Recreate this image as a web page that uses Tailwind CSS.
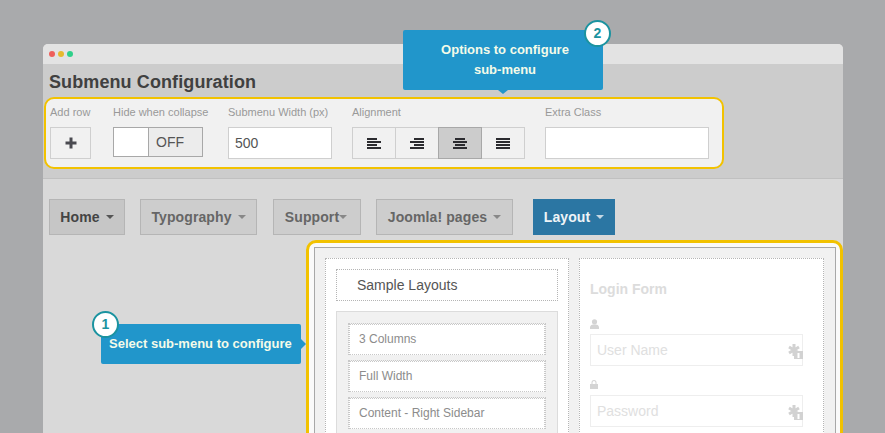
<!DOCTYPE html>
<html lang="en">
<head>
    <meta charset="UTF-8">
    <title>Submenu Configuration</title>
    <script src="https://cdn.jsdelivr.net/npm/@tailwindcss/browser@4"></script>
</head>
<body class="bg-[#a9aaac] h-[433px] overflow-hidden font-['Liberation_Sans',Arial,sans-serif] antialiased">
<div class="relative h-[433px] overflow-hidden pt-[44px] pl-[43px]">
    <div class="w-[800px] h-[389px] rounded-t-[5px] overflow-hidden bg-[#d9d9d9]">
        <!-- window bar -->
        <div class="h-[20px] bg-[#e3e3e3] flex items-center gap-[3px] pl-[6px]">
            <span class="w-[6px] h-[6px] rounded-full bg-[#ee5f5b]"></span>
            <span class="w-[6px] h-[6px] rounded-full bg-[#e6b92e]"></span>
            <span class="w-[6px] h-[6px] rounded-full bg-[#2fd08a]"></span>
        </div>

        <!-- config toolbar -->
        <div class="h-[115px] bg-[#cccccc] border-b border-[#c0c0c0]">
            <h1 class="pl-[6px] pt-[8px] h-[33px] text-[18px] leading-[21px] tracking-[0.1px] font-bold text-[#404040]">Submenu Configuration</h1>
            <div class="w-[680px] h-[72px] ml-[1px] border-[2px] border-[#f2c200] rounded-[10px] bg-[#f1f1f1] flex pl-[4px] pt-[6px] text-[11px] text-[#999999]">
                <div class="w-[63px]">
                    <div class="h-[22px] leading-[14px]">Add row</div>
                    <div class="w-[41px] h-[32px] border border-[#cfcfcf] flex items-center justify-center">
                        <svg width="12" height="12" viewBox="0 0 12 12"><path d="M4.5 0.5h3v4h4v3h-4v4h-3v-4h-4v-3h4z" fill="#4a4a50"/></svg>
                    </div>
                </div>
                <div class="w-[115px]">
                    <div class="h-[22px] leading-[14px]">Hide when collapse</div>
                    <div class="w-[90px] h-[30px] border border-[#a8a8a8] flex text-[14px] text-[#555555]">
                        <div class="w-[35px] bg-white border-r border-[#a8a8a8]"></div>
                        <div class="flex-1 bg-[#ececec] pl-[7px] leading-[28px]">OFF</div>
                    </div>
                </div>
                <div class="w-[124px]">
                    <div class="h-[22px] leading-[14px]">Submenu Width (px)</div>
                    <div class="w-[104px] h-[32px] border border-[#cfcfcf] bg-white pl-[6px] leading-[30px] text-[14px] text-[#555555]">500</div>
                </div>
                <div class="w-[193px]">
                    <div class="h-[22px] leading-[14px]">Alignment</div>
                    <div class="w-[173px] h-[32px] border border-[#cfcfcf] flex">
                        <div class="w-[43px] border-r border-[#cfcfcf] flex items-center justify-center">
                            <svg width="15" height="11" viewBox="0 0 15 11" fill="#2b2b2f"><rect y="0" width="10" height="2"/><rect y="3" width="14" height="2"/><rect y="6" width="10" height="2"/><rect y="9" width="14" height="2"/></svg>
                        </div>
                        <div class="w-[43px] flex items-center justify-center">
                            <svg width="15" height="11" viewBox="0 0 15 11" fill="#2b2b2f"><rect x="4" y="0" width="10" height="2"/><rect y="3" width="14" height="2"/><rect x="4" y="6" width="10" height="2"/><rect y="9" width="14" height="2"/></svg>
                        </div>
                        <div class="w-[44px] -ml-px -my-px h-[32px] bg-[#cccccc] border border-[#a8a8a8] flex items-center justify-center">
                            <svg width="15" height="11" viewBox="0 0 15 11" fill="#2b2b2f"><rect x="2" y="0" width="10" height="2"/><rect y="3" width="14" height="2"/><rect x="2" y="6" width="10" height="2"/><rect y="9" width="14" height="2"/></svg>
                        </div>
                        <div class="flex-1 flex items-center justify-center">
                            <svg width="15" height="11" viewBox="0 0 15 11" fill="#2b2b2f"><rect y="0" width="14" height="2"/><rect y="3" width="14" height="2"/><rect y="6" width="14" height="2"/><rect y="9" width="14" height="2"/></svg>
                        </div>
                    </div>
                </div>
                <div class="w-[164px]">
                    <div class="h-[22px] leading-[14px]">Extra Class</div>
                    <div class="w-[164px] h-[32px] border border-[#cfcfcf] bg-white"></div>
                </div>
            </div>
        </div>

        <!-- main menu -->
        <div class="flex pl-[6px] pt-[20px] text-[14px] leading-[34px] tracking-[0.1px] font-bold text-[#666666]">
            <div class="w-[76px] h-[36px] border border-[#b5b5b5] bg-[#c6c6c6] text-[#444444] flex justify-center items-center gap-[6px]">Home<span class="border-x-[4px] border-x-transparent border-t-[4px] border-t-[#555555]"></span></div>
            <div class="w-[117px] h-[36px] ml-[15px] border border-[#b5b5b5] bg-[#cdcdcd] flex justify-center items-center gap-[6px]">Typography<span class="border-x-[4px] border-x-transparent border-t-[4px] border-t-[#888888]"></span></div>
            <div class="w-[88px] h-[36px] ml-[16px] pr-[2px] border border-[#b5b5b5] bg-[#cdcdcd] flex justify-center items-center">Support<span class="border-x-[4px] border-x-transparent border-t-[4px] border-t-[#888888]"></span></div>
            <div class="w-[137px] h-[36px] ml-[15px] border border-[#b5b5b5] bg-[#cdcdcd] flex justify-center items-center gap-[6px]">Joomla! pages<span class="border-x-[4px] border-x-transparent border-t-[4px] border-t-[#888888]"></span></div>
            <div class="w-[82px] h-[36px] ml-[20px] bg-[#2b76a3] text-[#eef4f7] flex justify-center items-center gap-[6px]">Layout<span class="border-x-[4px] border-x-transparent border-t-[4px] border-t-[#c5d8e4]"></span></div>
        </div>

        <!-- dropdown -->
        <div class="w-[537px] h-[200px] ml-[263px] mt-[5px] border-[3px] border-[#f2c200] rounded-t-[10px] bg-[#fafafa] pl-[5px] pt-[4px]">
            <div class="w-[522px] h-[200px] border border-[#a8a8a8] bg-[#f1f1f1] flex gap-[10px] pl-[10px] pt-[10px]">
                <div class="w-[244px] h-[200px] border border-dotted border-[#b5b5b5] bg-white p-[10px]">
                    <div class="h-[32px] border border-dotted border-[#b5b5b5] pl-[20px] leading-[30px] text-[14px] text-[#555555]">Sample Layouts</div>
                    <div class="h-[140px] mt-[10px] border border-[#dcdcdc] bg-[#f1f1f1] px-[11px] pt-[11px] text-[12px] text-[#8c8c8c] flex flex-col gap-[5px]">
                        <div class="h-[32px] shrink-0 border-x border-t border-dotted border-[#c8c8c8]"><div class="h-[31px] border border-dotted border-[#c8c8c8] bg-white pl-[9px] leading-[29px]">3 Columns</div></div>
                        <div class="h-[32px] shrink-0 border-x border-t border-dotted border-[#c8c8c8]"><div class="h-[31px] border border-dotted border-[#c8c8c8] bg-white pl-[9px] leading-[29px]">Full Width</div></div>
                        <div class="h-[32px] shrink-0 border-x border-t border-dotted border-[#c8c8c8]"><div class="h-[31px] border border-dotted border-[#c8c8c8] bg-white pl-[9px] leading-[29px]">Content - Right Sidebar</div></div>
                    </div>
                </div>
                <div class="w-[245px] h-[200px] border border-dotted border-[#b5b5b5] bg-white pl-[10px] pt-[20px]">
                    <div class="text-[14px] leading-[20px] font-bold text-[#dcdcdc]">Login Form</div>
                    <svg class="block mt-[20px]" width="9" height="10" viewBox="0 0 9 10" fill="#d4d4d4"><circle cx="4.5" cy="2.800" r="2.600"/><path d="M0 10V7.500Q1 5.500 3 5.500H6Q8 5.500 9 7.500V10z"/></svg>
                    <div class="relative w-[213px] h-[32px] mt-[5px] border border-[#eeeeee] pl-[6px] leading-[30px] text-[14px] text-[#e0e0e0]">User Name
                        <svg class="absolute right-[-1px] top-[8px]" width="15" height="16" viewBox="0 0 15 16"><path d="M6 1v12M1 4l10 6M1 10l10-6" stroke="#d2d2d2" stroke-width="3" fill="none"/><rect x="6" y="8" width="9" height="8" fill="#d2d2d2"/><rect x="9.500" y="10" width="2" height="5" fill="#ffffff"/></svg>
                    </div>
                    <svg class="block mt-[14px]" width="8" height="9" viewBox="0 0 8 9" fill="#d4d4d4"><path d="M0 4h8v5H0zM1.500 4V2.500a2.500 2.500 0 0 1 5 0V4h-1V2.500a1.500 1.500 0 0 0-3 0V4z"/></svg>
                    <div class="relative w-[213px] h-[32px] mt-[6px] border border-[#eeeeee] pl-[6px] leading-[30px] text-[14px] text-[#e0e0e0]">Password
                        <svg class="absolute right-[-1px] top-[8px]" width="15" height="16" viewBox="0 0 15 16"><path d="M6 1v12M1 4l10 6M1 10l10-6" stroke="#d2d2d2" stroke-width="3" fill="none"/><rect x="6" y="8" width="9" height="8" fill="#d2d2d2"/><rect x="9.500" y="10" width="2" height="5" fill="#ffffff"/></svg>
                    </div>
                </div>
            </div>
        </div>
    </div>

    <!-- callout 2 -->
    <div class="absolute left-[403px] top-[30px] w-[200px] h-[60px] rounded-[2px] bg-[#2196cb] text-center text-[13px] leading-[20px] font-bold text-[#f4fbe9] pt-[10px] pl-[4px]">
        Options to configure<br>sub-menu
        <span class="absolute left-[95px] top-[60px] border-x-[5px] border-x-transparent border-t-[4px] border-t-[#2196cb]"></span>
        <span class="absolute left-[181px] top-[-10px] w-[27px] h-[27px] rounded-full border-[2px] border-[#1b93a0] bg-white pl-0 text-[#1b93a0] text-[14px] leading-[23px]">2</span>
    </div>

    <!-- callout 1 -->
    <div class="absolute left-[101px] top-[324px] w-[200px] h-[40px] rounded-[2px] bg-[#2196cb] text-[13px] leading-[40px] font-bold text-[#f4fbe9] pl-[8px]">
        Select sub-menu to configure
        <span class="absolute left-[200px] top-[15px] border-y-[5px] border-y-transparent border-l-[5px] border-l-[#2196cb]"></span>
        <span class="absolute left-[-9px] top-[-13px] w-[27px] h-[27px] rounded-full border-[2px] border-[#1b93a0] bg-white text-center text-[#1b93a0] text-[14px] leading-[23px]">1</span>
    </div>
</div>
</body>
</html>
